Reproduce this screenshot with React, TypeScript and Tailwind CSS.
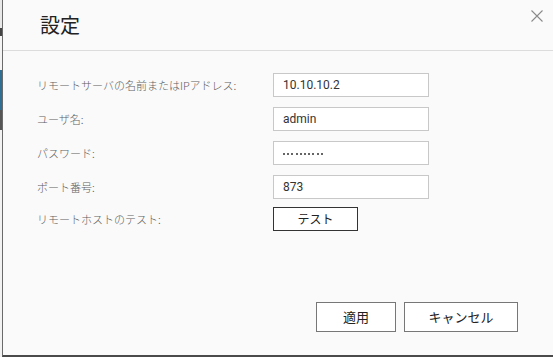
import React from "react";

const jp = { fontFamily: '"Noto Sans CJK JP", "Noto Sans", sans-serif' };
const rb = { fontFamily: 'Roboto, "Noto Sans CJK JP", sans-serif' };

function Row({ label, children }: { label: string; children: React.ReactNode }) {
  return (
    <div className="flex items-center h-[24px]">
      <div className="w-[236px] text-[11px] font-light text-[#606060] leading-none" style={jp}>
        {label}
      </div>
      {children}
    </div>
  );
}

function Field({ children }: { children: React.ReactNode }) {
  return (
    <div
      className="w-[156px] h-[24px] border border-[#c8c8c8] bg-white flex items-center pl-[9px] text-[12px] text-[#333]"
      style={rb}
    >
      {children}
    </div>
  );
}

export default function App() {
  const dots = Array.from({ length: 10 });
  return (
    <div className="w-[553px] h-[357px] flex overflow-hidden bg-[#fafafa]">
      <div className="w-[2px] h-full flex flex-col bg-white">
        <div className="h-[28px] bg-[#e8e8e8]" />
        <div className="h-[8px] bg-[#444]" />
        <div className="h-[34px] bg-[#f4f4f4]" />
        <div className="h-[40px] bg-[#2f6f94]" />
        <div className="h-[20px] bg-[#555]" />
        <div className="flex-1 bg-[#f2f2f2]" />
      </div>
      <div className="flex-1 h-full flex flex-col border-l border-l-[#6a6a6a] border-b-2 border-b-[#4a4a4a] bg-[#fafafa]">
        <div className="h-[51px] border-b border-[#dcdcdc] flex items-start justify-between">
          <div className="pl-[37px] pt-[12px] text-[20px] text-[#222] leading-[26px]" style={jp}>
            設定
          </div>
          <svg className="mr-[10px] mt-[10px]" width="12" height="12" viewBox="0 0 12 12">
            <path d="M0.5 0.5 L11.5 11.5 M11.5 0.5 L0.5 11.5" stroke="#8a8a8a" strokeWidth="1.1" fill="none" />
          </svg>
        </div>
        <div className="pl-[34px] pt-[22px] flex flex-col gap-[10px]">
          <Row label="リモートサーバの名前またはIPアドレス:">
            <Field>10.10.10.2</Field>
          </Row>
          <Row label="ユーザ名:">
            <Field>admin</Field>
          </Row>
          <Row label="パスワード:">
            <Field>
              <div className="flex gap-[2.2px] pt-[1px]">
                {dots.map((_, i) => (
                  <div key={i} className="w-[2px] h-[2px] rounded-full bg-[#333]" />
                ))}
              </div>
            </Field>
          </Row>
          <Row label="ポート番号:">
            <Field>873</Field>
          </Row>
          <div className="-mt-[2px]">
            <Row label="リモートホストのテスト:">
              <button
                className="w-[85px] h-[24px] border border-[#333] bg-white text-[12px] text-[#222] leading-none"
                style={jp}
              >
                テスト
              </button>
            </Row>
          </div>
        </div>
        <div className="mt-auto flex justify-end gap-[8px] pr-[35px] pb-[23px]">
          <button className="w-[80px] h-[30px] border border-[#777] bg-white text-[13px] text-[#222]" style={jp}>
            適用
          </button>
          <button className="w-[114px] h-[30px] border border-[#777] bg-white text-[13px] text-[#222]" style={jp}>
            キャンセル
          </button>
        </div>
      </div>
    </div>
  );
}
